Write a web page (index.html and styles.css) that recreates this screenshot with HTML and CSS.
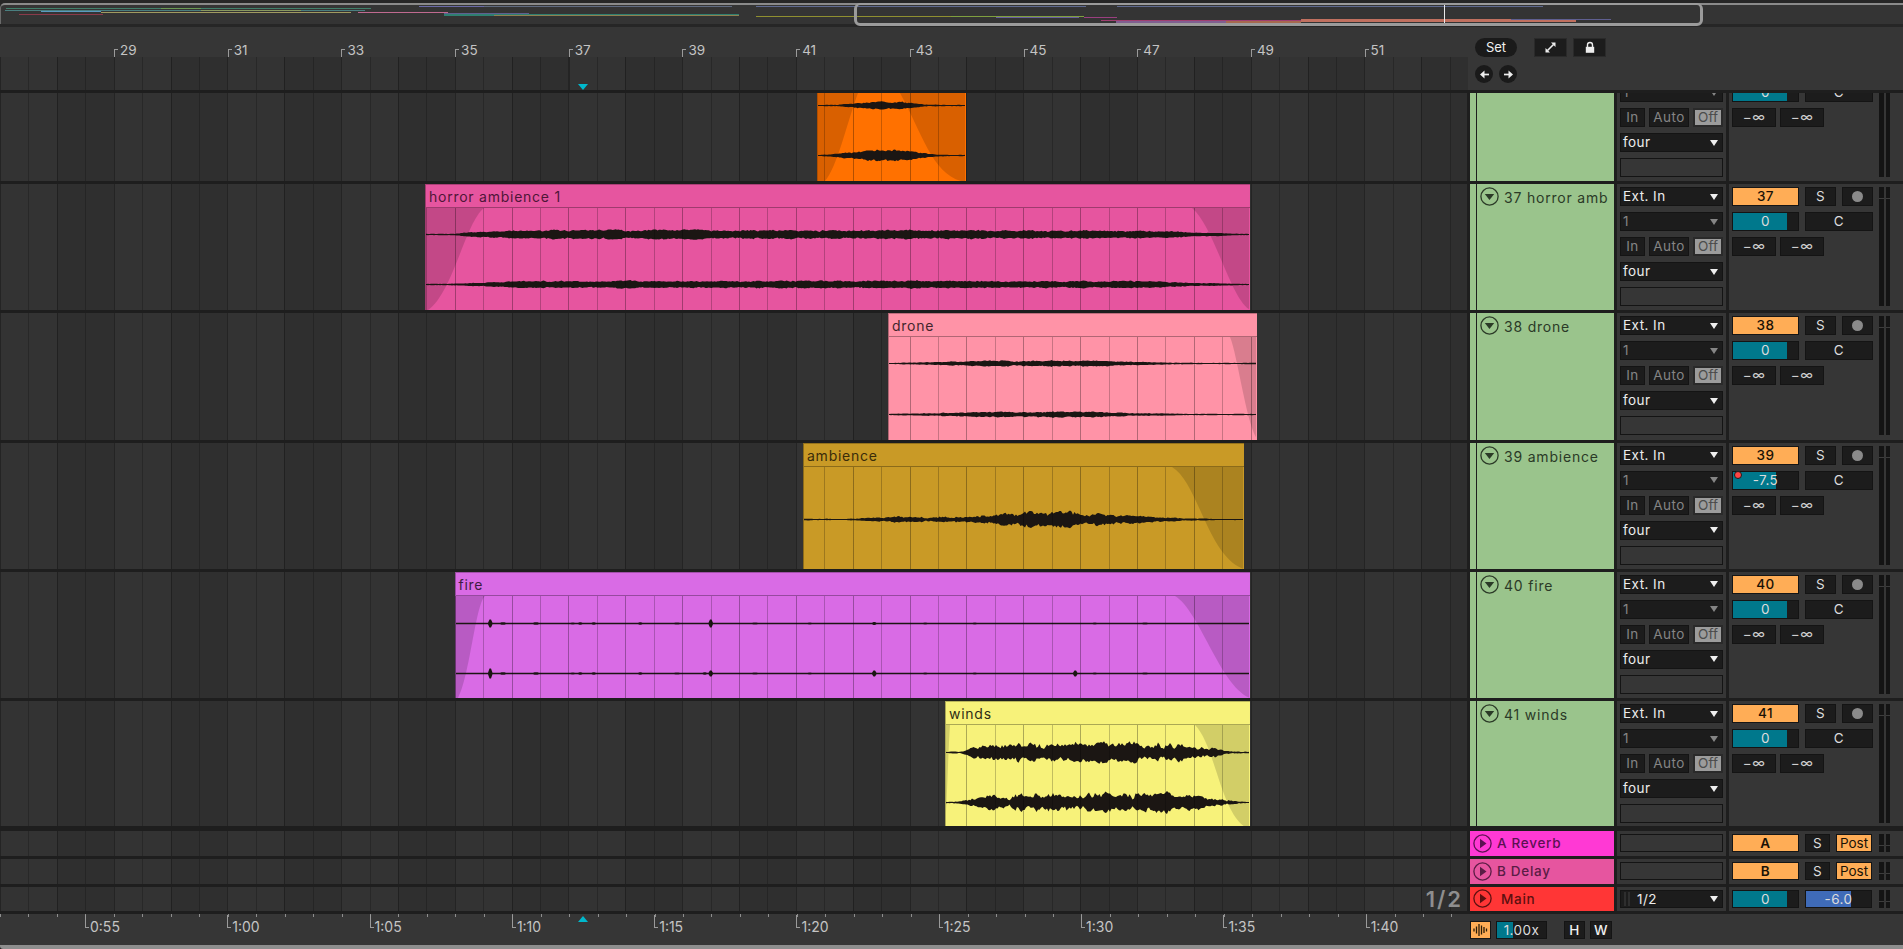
FILE: index.html
```html
<!DOCTYPE html>
<html lang="en">
<head>
    <meta charset="UTF-8">
    <title>Arrangement View</title>
    <link rel="stylesheet" href="styles.css">
</head>
<body>
    <svg class="icon-defs" width="0" height="0">
        <symbol id="icon-fold" viewBox="0 0 19 19">
            <circle cx="9.5" cy="9.5" r="8.6" fill="none" stroke="currentColor" stroke-width="1.3"/>
            <polygon points="4.8,7 14.2,7 9.5,13" fill="currentColor"/>
        </symbol>
        <symbol id="icon-play" viewBox="0 0 19 19">
            <circle cx="9.5" cy="9.5" r="8.6" fill="none" stroke="currentColor" stroke-width="1.3"/>
            <polygon points="7,4.8 7,14.2 13.5,9.5" fill="currentColor"/>
        </symbol>
    </svg>

    <div class="overview">
        <svg class="overview-map" width="1903" height="19">
            <rect x="5" y="3" width="365" height="1" fill="#3f7f6a"/>
            <rect x="160" y="3" width="40" height="1" fill="#6a9a55"/>
            <rect x="4" y="5" width="360" height="1" fill="#4a7f80"/>
            <rect x="40" y="6" width="60" height="1" fill="#5a9ac0"/>
            <rect x="100" y="7" width="250" height="1" fill="#a09a60"/>
            <rect x="200" y="5" width="100" height="1" fill="#8a9a60"/>
            <rect x="18" y="9" width="84" height="1" fill="#8a3a4a"/>
            <rect x="357" y="7" width="90" height="1" fill="#c06a90"/>
            <rect x="418" y="1" width="65" height="1" fill="#6a6aa8"/>
            <rect x="483" y="1" width="248" height="1" fill="#5f6a80"/>
            <rect x="755" y="1" width="330" height="1" fill="#5f6a90"/>
            <rect x="1116" y="1" width="426" height="1" fill="#5f6a90"/>
            <rect x="443" y="8" width="85" height="1" fill="#5f5f90"/>
            <rect x="443" y="9" width="295" height="2" fill="#2f7f70"/>
            <rect x="493" y="10" width="245" height="1" fill="#8f8050"/>
            <rect x="755" y="11" width="200" height="1" fill="#8f8f30"/>
            <rect x="950" y="11" width="133" height="1" fill="#7f9f3f"/>
            <rect x="995" y="12" width="83" height="1" fill="#6a5fa0"/>
            <rect x="1083" y="12" width="33" height="1" fill="#9a3f80"/>
            <rect x="1100" y="15" width="360" height="1" fill="#a03f70"/>
            <rect x="1115" y="16" width="110" height="2" fill="#7f5f90"/>
            <rect x="1225" y="16" width="75" height="2" fill="#a5694f"/>
            <rect x="1300" y="14" width="275" height="3" fill="#c0705f"/>
            <rect x="1380" y="18" width="190" height="1" fill="#c08a30"/>
            <rect x="1510" y="14" width="100" height="1" fill="#5f5f90"/>
            <rect x="1443" y="0" width="1" height="19" fill="#e8e8e8"/>
        </svg>
        <div class="overview-frame"></div>
    </div>

    <div class="header">
        <div class="bar-ruler">
            <div class="ruler-marks">
                <div class="bar-mark">29</div>
                <div class="bar-mark">31</div>
                <div class="bar-mark">33</div>
                <div class="bar-mark">35</div>
                <div class="bar-mark">37</div>
                <div class="bar-mark">39</div>
                <div class="bar-mark">41</div>
                <div class="bar-mark">43</div>
                <div class="bar-mark">45</div>
                <div class="bar-mark">47</div>
                <div class="bar-mark">49</div>
                <div class="bar-mark">51</div>
            </div>
            <div class="beat-area">
                <div class="grid"></div>
                <div class="marker marker-down"></div>
            </div>
        </div>
        <div class="session-tools">
            <div class="tool-row">
                <div class="pill">Set</div>
                <div class="square-btn expand-btn">
                    <svg width="13" height="13" viewBox="0 0 13 13"><path d="M3.5 9.5 L9.5 3.5" stroke="#eee" stroke-width="1.6"/><polygon points="7,1.5 11.5,1.5 11.5,6" fill="#eee"/><polygon points="1.5,7 6,11.5 1.5,11.5" fill="#eee"/></svg>
                </div>
                <div class="square-btn">
                    <svg width="12" height="13" viewBox="0 0 12 13"><path d="M3.5 6 V4 a2.5 2.5 0 0 1 5 0 V6" fill="none" stroke="#eee" stroke-width="1.4"/><rect x="1.8" y="5.8" width="8.4" height="6" fill="#eee"/></svg>
                </div>
            </div>
            <div class="tool-row">
                <div class="nudge-btn">
                    <svg width="11" height="11" viewBox="0 0 11 11"><path d="M10 5.5 H3" stroke="#eee" stroke-width="1.7"/><polygon points="5.5,1.5 5.5,9.5 1,5.5" fill="#eee"/></svg>
                </div>
                <div class="nudge-btn">
                    <svg width="11" height="11" viewBox="0 0 11 11"><path d="M1 5.5 H8" stroke="#eee" stroke-width="1.7"/><polygon points="5.5,1.5 5.5,9.5 10,5.5" fill="#eee"/></svg>
                </div>
            </div>
        </div>
    </div>

    <!-- 36 is scrolled, only the bottom of it shows -->
    <div class="track track-cut">
        <div class="lane">
            <div class="clip clip-orange" style="left: 817px; width: 149px;">
                <div class="clip-body">
                    <svg width="100%" height="100%">
                        <path class="fade" d="M0 0H41C30 30 20 75 8 88H0Z"/>
                        <path class="fade" d="M149 0H83C105 40 115 80 144 88H149Z"/>
                        <path class="wave" data-w="149" data-mid="12" data-seed="3" data-noise="0.2" data-env="0:.6 22:.7 45:3 80:3.5 110:.8 149:.6"/>
                        <path class="wave" data-w="149" data-mid="62" data-seed="5" data-noise="0.2" data-env="0:.6 14:1 45:4 66:5.5 90:4 120:.8 149:.6"/>
                    </svg>
                </div>
            </div>
            <div class="grid"></div>
        </div>
        <div class="track-strip"></div>
        <div class="track-title"></div>
        <div class="panel routing">
            <div class="ctl select dim"><span>1</span><i class="arrow"></i></div>
            <div class="monitor">
                <div class="ctl mon-in dim">In</div>
                <div class="ctl mon-auto dim">Auto</div>
                <div class="ctl mon-off">Off</div>
            </div>
            <div class="ctl select"><span>four</span><i class="arrow"></i></div>
            <div class="ctl field"></div>
        </div>
        <div class="panel channel">
            <div class="chan-rows">
                <div class="chan-row">
                    <div class="ctl vol" style="--fill: 83%;">0</div>
                    <div class="ctl pan">C</div>
                </div>
                <div class="chan-row chan-row-tight">
                    <div class="ctl peak">−∞</div>
                    <div class="ctl peak">−∞</div>
                </div>
            </div>
            <div class="meter"><i></i><i></i></div>
        </div>
    </div>

    <div class="track">
        <div class="lane">
            <div class="clip clip-horror" style="left: 425px; width: 825px;">
                <div class="clip-name">horror ambience 1</div>
                <div class="clip-body">
                    <svg width="100%" height="100%">
                        <path class="fade" d="M0 0H59C40 15 28 85 3 102H0Z"/>
                        <path class="fade" d="M825 0H767C790 20 805 90 825 102Z"/>
                        <path class="wave" data-w="825" data-mid="26" data-seed="11" data-noise="0.2" data-env="0:.6 30:.7 45:2.5 80:3.5 140:4 500:4 720:3.5 770:2 825:.5"/>
                        <path class="wave" data-w="825" data-mid="76" data-seed="17" data-noise="0.2" data-env="0:.6 30:.7 50:1.8 100:3 400:3.5 720:3 770:1.5 825:.5"/>
                    </svg>
                </div>
            </div>
            <div class="grid"></div>
        </div>
        <div class="track-strip"></div>
        <div class="track-title"><svg class="fold"><use href="#icon-fold"/></svg><span>37 horror amb</span></div>
        <div class="panel routing">
            <div class="ctl select"><span>Ext. In</span><i class="arrow"></i></div>
            <div class="ctl select dim"><span>1</span><i class="arrow"></i></div>
            <div class="monitor">
                <div class="ctl mon-in dim">In</div>
                <div class="ctl mon-auto dim">Auto</div>
                <div class="ctl mon-off">Off</div>
            </div>
            <div class="ctl select"><span>four</span><i class="arrow"></i></div>
            <div class="ctl field"></div>
        </div>
        <div class="panel channel">
            <div class="chan-rows">
                <div class="chan-row">
                    <div class="ctl arm">37</div>
                    <div class="ctl solo">S</div>
                    <div class="ctl rec"><i class="rec-dot"></i></div>
                </div>
                <div class="chan-row">
                    <div class="ctl vol" style="--fill: 83%;">0</div>
                    <div class="ctl pan">C</div>
                </div>
                <div class="chan-row chan-row-tight">
                    <div class="ctl peak">−∞</div>
                    <div class="ctl peak">−∞</div>
                </div>
            </div>
            <div class="meter"><i></i><i></i></div>
        </div>
    </div>

    <div class="track">
        <div class="lane">
            <div class="clip clip-drone" style="left: 888px; width: 369px;">
                <div class="clip-name">drone</div>
                <div class="clip-body">
                    <svg width="100%" height="100%">
                        <path class="fade" d="M369 0H342C350 20 358 85 369 102Z"/>
                        <path class="wave" data-w="369" data-mid="26" data-seed="23" data-noise="0.25" data-env="0:.6 40:1.2 100:2.4 210:2.4 270:1.2 300:.7 369:.6"/>
                        <path class="wave" data-w="369" data-mid="77" data-seed="29" data-noise="0.25" data-env="0:.6 40:1.2 100:2.4 200:2.6 260:1.2 300:.7 369:.6"/>
                    </svg>
                </div>
            </div>
            <div class="grid"></div>
        </div>
        <div class="track-strip"></div>
        <div class="track-title"><svg class="fold"><use href="#icon-fold"/></svg><span>38 drone</span></div>
        <div class="panel routing">
            <div class="ctl select"><span>Ext. In</span><i class="arrow"></i></div>
            <div class="ctl select dim"><span>1</span><i class="arrow"></i></div>
            <div class="monitor">
                <div class="ctl mon-in dim">In</div>
                <div class="ctl mon-auto dim">Auto</div>
                <div class="ctl mon-off">Off</div>
            </div>
            <div class="ctl select"><span>four</span><i class="arrow"></i></div>
            <div class="ctl field"></div>
        </div>
        <div class="panel channel">
            <div class="chan-rows">
                <div class="chan-row">
                    <div class="ctl arm">38</div>
                    <div class="ctl solo">S</div>
                    <div class="ctl rec"><i class="rec-dot"></i></div>
                </div>
                <div class="chan-row">
                    <div class="ctl vol" style="--fill: 83%;">0</div>
                    <div class="ctl pan">C</div>
                </div>
                <div class="chan-row chan-row-tight">
                    <div class="ctl peak">−∞</div>
                    <div class="ctl peak">−∞</div>
                </div>
            </div>
            <div class="meter"><i></i><i></i></div>
        </div>
    </div>

    <div class="track">
        <div class="lane">
            <div class="clip clip-ambience" style="left: 803px; width: 441px;">
                <div class="clip-name">ambience</div>
                <div class="clip-body">
                    <svg width="100%" height="100%">
                        <path class="fade" d="M441 0H369C395 15 405 90 441 102Z"/>
                        <path class="wave" data-w="441" data-mid="52" data-seed="31" data-noise="0.35" data-env="0:.6 50:.8 100:2.5 190:3.5 215:6 285:6 305:3.5 345:2.5 385:1 410:.6 441:.5"/>
                    </svg>
                </div>
            </div>
            <div class="grid"></div>
        </div>
        <div class="track-strip"></div>
        <div class="track-title"><svg class="fold"><use href="#icon-fold"/></svg><span>39 ambience</span></div>
        <div class="panel routing">
            <div class="ctl select"><span>Ext. In</span><i class="arrow"></i></div>
            <div class="ctl select dim"><span>1</span><i class="arrow"></i></div>
            <div class="monitor">
                <div class="ctl mon-in dim">In</div>
                <div class="ctl mon-auto dim">Auto</div>
                <div class="ctl mon-off">Off</div>
            </div>
            <div class="ctl select"><span>four</span><i class="arrow"></i></div>
            <div class="ctl field"></div>
        </div>
        <div class="panel channel">
            <div class="chan-rows">
                <div class="chan-row">
                    <div class="ctl arm">39</div>
                    <div class="ctl solo">S</div>
                    <div class="ctl rec"><i class="rec-dot"></i></div>
                </div>
                <div class="chan-row">
                    <div class="ctl vol automated" style="--fill: 66%;">-7.5<i class="auto-dot"></i></div>
                    <div class="ctl pan">C</div>
                </div>
                <div class="chan-row chan-row-tight">
                    <div class="ctl peak">−∞</div>
                    <div class="ctl peak">−∞</div>
                </div>
            </div>
            <div class="meter"><i></i><i></i></div>
        </div>
    </div>

    <div class="track">
        <div class="lane">
            <div class="clip clip-fire" style="left: 454.5px; width: 795.5px;">
                <div class="clip-name">fire</div>
                <div class="clip-body">
                    <svg width="100%" height="100%">
                        <path class="fade" d="M0 0H30C20 10 15 80 3 102H0Z"/>
                        <path class="fade" d="M795 0H720C745 15 765 90 795 102Z"/>
                        <path class="wave" data-w="795" data-mid="27" data-seed="37" data-noise="0" data-env="0:.8 795:.8" data-spikes="35:4 48:1.2 81:1.2 118:1.1 125:1.2 139:1.2 185:1.2 222:1.1 256:4 300:1.1 355:1 419:1.5 470:1.1 520:1.1 640:1 690:1"/>
                        <path class="wave" data-w="795" data-mid="77" data-seed="41" data-noise="0" data-env="0:.8 795:.8" data-spikes="35:5 48:1.2 81:1.2 118:1.1 125:1.2 139:1.2 185:1.2 222:1.1 250:1.2 256:3 300:1.1 355:1 419:3 470:1.1 520:1.1 620:3 640:1 690:1"/>
                    </svg>
                </div>
            </div>
            <div class="grid"></div>
        </div>
        <div class="track-strip"></div>
        <div class="track-title"><svg class="fold"><use href="#icon-fold"/></svg><span>40 fire</span></div>
        <div class="panel routing">
            <div class="ctl select"><span>Ext. In</span><i class="arrow"></i></div>
            <div class="ctl select dim"><span>1</span><i class="arrow"></i></div>
            <div class="monitor">
                <div class="ctl mon-in dim">In</div>
                <div class="ctl mon-auto dim">Auto</div>
                <div class="ctl mon-off">Off</div>
            </div>
            <div class="ctl select"><span>four</span><i class="arrow"></i></div>
            <div class="ctl field"></div>
        </div>
        <div class="panel channel">
            <div class="chan-rows">
                <div class="chan-row">
                    <div class="ctl arm">40</div>
                    <div class="ctl solo">S</div>
                    <div class="ctl rec"><i class="rec-dot"></i></div>
                </div>
                <div class="chan-row">
                    <div class="ctl vol" style="--fill: 83%;">0</div>
                    <div class="ctl pan">C</div>
                </div>
                <div class="chan-row chan-row-tight">
                    <div class="ctl peak">−∞</div>
                    <div class="ctl peak">−∞</div>
                </div>
            </div>
            <div class="meter"><i></i><i></i></div>
        </div>
    </div>

    <div class="track track-last">
        <div class="lane">
            <div class="clip clip-winds" style="left: 945px; width: 305px;">
                <div class="clip-name">winds</div>
                <div class="clip-body">
                    <svg width="100%" height="100%">
                        <path class="fade" d="M0 0H5C3 30 2 80 0 102Z"/>
                        <path class="fade" d="M305 0H250C270 20 275 85 300 102H305Z"/>
                        <path class="wave" data-w="305" data-mid="27" data-seed="43" data-noise="0.4" data-env="0:.6 15:.9 30:4 50:6.5 120:7.5 220:7 265:4.5 285:1.5 305:.6"/>
                        <path class="wave" data-w="305" data-mid="77" data-seed="47" data-noise="0.4" data-env="0:.6 15:.9 30:4 50:6 120:7.5 220:7 265:4 290:1.5 305:.6"/>
                    </svg>
                </div>
            </div>
            <div class="grid"></div>
        </div>
        <div class="track-strip"></div>
        <div class="track-title"><svg class="fold"><use href="#icon-fold"/></svg><span>41 winds</span></div>
        <div class="panel routing">
            <div class="ctl select"><span>Ext. In</span><i class="arrow"></i></div>
            <div class="ctl select dim"><span>1</span><i class="arrow"></i></div>
            <div class="monitor">
                <div class="ctl mon-in dim">In</div>
                <div class="ctl mon-auto dim">Auto</div>
                <div class="ctl mon-off">Off</div>
            </div>
            <div class="ctl select"><span>four</span><i class="arrow"></i></div>
            <div class="ctl field"></div>
        </div>
        <div class="panel channel">
            <div class="chan-rows">
                <div class="chan-row">
                    <div class="ctl arm">41</div>
                    <div class="ctl solo">S</div>
                    <div class="ctl rec"><i class="rec-dot"></i></div>
                </div>
                <div class="chan-row">
                    <div class="ctl vol" style="--fill: 83%;">0</div>
                    <div class="ctl pan">C</div>
                </div>
                <div class="chan-row chan-row-tight">
                    <div class="ctl peak">−∞</div>
                    <div class="ctl peak">−∞</div>
                </div>
            </div>
            <div class="meter"><i></i><i></i></div>
        </div>
    </div>

    <!-- return tracks and main -->
    <div class="track return">
        <div class="lane"><div class="grid"></div></div>
        <div class="return-title title-a"><svg class="fold"><use href="#icon-play"/></svg><span>A Reverb</span></div>
        <div class="panel routing"><div class="ctl field"></div></div>
        <div class="panel channel">
            <div class="chan-row">
                <div class="ctl arm">A</div>
                <div class="ctl solo solo-small">S</div>
                <div class="ctl post">Post</div>
            </div>
            <div class="meter"><i></i><i></i></div>
        </div>
    </div>

    <div class="track return">
        <div class="lane"><div class="grid"></div></div>
        <div class="return-title title-b"><svg class="fold"><use href="#icon-play"/></svg><span>B Delay</span></div>
        <div class="panel routing"><div class="ctl field"></div></div>
        <div class="panel channel">
            <div class="chan-row">
                <div class="ctl arm">B</div>
                <div class="ctl solo solo-small">S</div>
                <div class="ctl post">Post</div>
            </div>
            <div class="meter"><i></i><i></i></div>
        </div>
    </div>

    <div class="track return return-main">
        <div class="lane"><div class="grid"></div><div class="overlay-ratio">1/2</div></div>
        <div class="return-title title-main"><svg class="fold"><use href="#icon-play"/></svg><span>Main</span></div>
        <div class="panel routing">
            <div class="ctl select select-main"><i class="mini-meter"></i><span>1/2</span><i class="arrow"></i></div>
        </div>
        <div class="panel channel">
            <div class="chan-row">
                <div class="ctl vol" style="--fill: 83%;">0</div>
                <div class="ctl vol vol-blue" style="--fill: 69%;">-6.0</div>
            </div>
            <div class="meter"><i></i><i></i></div>
        </div>
    </div>

    <div class="footer">
        <div class="time-ruler">
            <div class="time-ticks"></div>
            <div class="time-marks">
                <div class="time-mark">0:55</div>
                <div class="time-mark">1:00</div>
                <div class="time-mark">1:05</div>
                <div class="time-mark">1:10</div>
                <div class="time-mark">1:15</div>
                <div class="time-mark">1:20</div>
                <div class="time-mark">1:25</div>
                <div class="time-mark">1:30</div>
                <div class="time-mark">1:35</div>
                <div class="time-mark">1:40</div>
            </div>
            <div class="marker marker-up"></div>
        </div>
        <div class="footer-tools">
            <div class="tool-wave">
                <svg width="15" height="14" viewBox="0 0 15 14"><path d="M1 5.5v3M3.5 3.5v7M6 1v12M8.5 2.5v9M11 4v6M13.5 5.5v3" stroke="#2a1c08" stroke-width="1.3"/></svg>
            </div>
            <div class="ctl vol zoom-amount" style="--fill: 32%;">1.00x</div>
            <div class="ctl tool-h">H</div>
            <div class="ctl tool-w">W</div>
        </div>
    </div>
    <div class="bottom-edge"></div>

    <script src="script.js"></script>
</body>
</html>
```

FILE: styles.css
```css
* {
    box-sizing: border-box;
}
html, body {
    margin: 0;
    height: 949px;
    overflow: hidden;
}
body {
    background-color: #1e1e1e;
    font-family: Inter, "Liberation Sans", sans-serif;
    font-size: 13.5px;
    color: #e6e6e6;
}

/* overview */
.icon-defs {
    position: absolute;
}
.overview {
    position: relative;
    height: 27px;
    background-color: #262626;
    padding-top: 3px;
}
.overview-map {
    display: block;
    height: 21px;
    width: 100%;
    background-color: #343434;
    border-top: 2px solid #8a8a8a;
    border-left: 1px solid #6a6a6a;
    border-top-left-radius: 5px;
}
.overview-frame {
    position: absolute;
    left: 854px;
    top: 3px;
    width: 849px;
    height: 23px;
    border: 3px solid #9b9b9b;
    border-top-width: 2px;
    border-radius: 6px;
}

/* top ruler */
.header {
    display: flex;
    height: 63px;
    margin-bottom: 3px;
    background-color: #363636;
}
.bar-ruler {
    width: 1468px;
    flex: none;
}
.ruler-marks {
    display: flex;
    height: 30px;
    padding-left: 114px;
}
.bar-mark {
    position: relative;
    width: 113.7px;
    flex: none;
    padding: 15px 0 0 6px;
    line-height: 16px;
    font-size: 13.5px;
    color: #c4c4c4;
}
.bar-mark::before {
    content: "";
    position: absolute;
    left: 0;
    top: 22px;
    width: 3px;
    height: 8px;
    border-left: 1px solid #9a9a9a;
    border-top: 1px solid #9a9a9a;
}
.beat-area {
    position: relative;
    height: 33px;
    background: repeating-linear-gradient(90deg, #333333 0 56.85px, #2f2f2f 56.85px 113.7px);
    overflow: hidden;
}
.session-tools {
    flex: 1;
    padding: 11px 0 0 7px;
}
.tool-row {
    display: flex;
    gap: 6px;
    margin-bottom: 8px;
}
.pill {
    width: 42px;
    height: 19px;
    border-radius: 10px;
    background-color: #1a1a1a;
    color: #f0f0f0;
    font-size: 13px;
    line-height: 19px;
    text-align: center;
}
.square-btn {
    display: flex;
    align-items: center;
    justify-content: center;
    width: 33px;
    height: 19px;
    background-color: #1c1c1c;
    border: 1px solid #2a2a2a;
}
.expand-btn {
    margin-left: 11px;
}
.nudge-btn {
    display: flex;
    align-items: center;
    justify-content: center;
    width: 18px;
    height: 18px;
    border-radius: 50%;
    background-color: #1a1a1a;
}
.marker {
    position: absolute;
    left: 578px;
    width: 0;
    height: 0;
    border-left: 5.5px solid transparent;
    border-right: 5.5px solid transparent;
}
.marker-down {
    bottom: 0;
    border-top: 6px solid #00b8cc;
    z-index: 2;
}
.marker-up {
    top: 2px;
    border-bottom: 6px solid #00b8cc;
}

/* track rows */
.track {
    display: flex;
    height: 126.3px;
    margin-bottom: 3px;
    overflow: hidden;
}
.track-cut {
    height: 88px;
}
.track-last {
    height: 124.8px;
    margin-bottom: 5px;
}
.lane {
    position: relative;
    width: 1467px;
    flex: none;
    margin-right: 3px;
    overflow: hidden;
    background: repeating-linear-gradient(90deg, #333333 0 56.85px, #2f2f2f 56.85px 113.7px);
}
.grid {
    position: absolute;
    top: 0;
    bottom: 0;
    left: 0;
    right: 0;
    z-index: 1;
    background: repeating-linear-gradient(90deg,
        rgba(0,0,0,0.3) 0 1px, transparent 1px 28.425px,
        rgba(0,0,0,0.22) 28.425px 29.425px, transparent 29.425px 56.85px);
}
.track-strip {
    width: 6px;
    flex: none;
    margin-right: 1px;
    background-color: #9ac48c;
}
.track-title {
    display: flex;
    align-items: flex-start;
    width: 137px;
    flex: none;
    margin-right: 3px;
    padding: 3px 0 0 3px;
    background-color: #9ac48c;
    color: #2b3a27;
    font-size: 14px;
    letter-spacing: 0.8px;
    line-height: 21px;
}
.fold {
    width: 19px;
    height: 19px;
    flex: none;
    margin-right: 5px;
}
.return-title {
    display: flex;
    align-items: center;
    width: 144px;
    flex: none;
    margin-right: 3px;
    padding-left: 3px;
    font-size: 13.5px;
    font-weight: 500;
    letter-spacing: 0.7px;
}
.title-a {
    background-color: #ff39d4;
    color: #5c1152;
}
.title-b {
    background-color: #e6559f;
    color: #5a1c45;
}
.title-main {
    background-color: #ff3636;
    color: #5c1010;
}
.title-main .fold {
    margin-right: 9px;
}
.panel {
    background-color: #363636;
    padding: 3px;
}
.routing {
    display: flex;
    flex-direction: column;
    gap: 6px;
    width: 109px;
    flex: none;
    margin-right: 3px;
}
.track-cut .routing {
    justify-content: flex-end;
    padding-bottom: 4px;
}
.channel {
    display: flex;
    gap: 6px;
    flex: 1;
}
.track-cut .channel {
    align-items: flex-end;
    padding-bottom: 4px;
}
.chan-rows {
    display: flex;
    flex-direction: column;
    gap: 6px;
    width: 141px;
    flex: none;
    height: 119px;
}
.track-cut .chan-rows {
    height: 44px;
    margin-bottom: 50px;
}
.chan-row {
    display: flex;
    gap: 6px;
    width: 141px;
    flex: none;
}
.chan-row-tight {
    gap: 4px;
}

/* controls */
.ctl {
    position: relative;
    flex: none;
    height: 19px;
    line-height: 17px;
    text-align: center;
    background-color: #1c1c1c;
    border: 1px solid #141414;
    letter-spacing: 0.45px;
}
.select {
    display: flex;
    align-items: center;
    justify-content: space-between;
    padding: 0 4px 0 2px;
    color: #ececec;
}
.arrow {
    width: 0;
    height: 0;
    border-left: 4.5px solid transparent;
    border-right: 4.5px solid transparent;
    border-top: 6.5px solid #eeeeee;
}
.dim {
    color: #858585;
}
.dim .arrow {
    border-top-color: #858585;
}
.monitor {
    display: flex;
    justify-content: space-between;
}
.mon-in {
    width: 25px;
}
.mon-auto {
    width: 40px;
}
.mon-off {
    width: 30px;
    background-color: #9c9c9c;
    color: #4c4c4c;
    border: 2px solid #2a2a2a;
    line-height: 15px;
    letter-spacing: 0;
}
.field {
    background-color: #363636;
}
.arm {
    width: 67px;
    background-color: #ffad56;
    color: #1a1206;
    border-color: #161616;
    font-weight: 500;
}
.solo {
    width: 31px;
    color: #dcdcdc;
}
.solo-small {
    width: 25px;
}
.rec {
    display: flex;
    align-items: center;
    justify-content: center;
    width: 31px;
}
.rec-dot {
    width: 11px;
    height: 11px;
    border-radius: 50%;
    background-color: #8a8a8a;
}
.vol {
    width: 67px;
    color: #dcdcdc;
    background: linear-gradient(90deg, #00788c var(--fill), #1c1c1c var(--fill));
}
.vol-blue {
    background: linear-gradient(90deg, #3f6bb8 var(--fill), #1c1c1c var(--fill));
}
.auto-dot {
    position: absolute;
    left: 1px;
    top: -1px;
    width: 8px;
    height: 8px;
    border-radius: 50%;
    background-color: #ff4545;
    border: 1px solid #1c1c1c;
}
.pan {
    width: 68px;
    color: #dcdcdc;
}
.peak {
    width: 44px;
    color: #cfcfcf;
}
.post {
    width: 36px;
    background-color: #ffad56;
    color: #1a1206;
    letter-spacing: 0;
}
.meter {
    display: flex;
    gap: 2px;
    flex: none;
    width: 11px;
    height: 119px;
}
.meter i {
    width: 4.5px;
    background: linear-gradient(180deg, #141414 0 11px, #3c3c3c 11px 12px, #141414 12px);
}

/* clips, the left and width of each is its place on the timeline */
.clip {
    position: absolute;
    top: 0;
    bottom: 0;
}
.clip-name {
    position: relative;
    z-index: 2;
    height: 24px;
    padding-left: 3px;
    background-color: inherit;
    line-height: 23px;
    font-size: 14px;
    letter-spacing: 0.75px;
    border-top: 1px solid rgba(0,0,0,0.25);
    border-bottom: 1px solid rgba(0,0,0,0.3);
    border-left: 1px solid rgba(0,0,0,0.3);
}
.clip-body {
    position: absolute;
    top: 24px;
    bottom: 0;
    left: 0;
    right: 0;
    overflow: hidden;
    border-left: 1px solid rgba(0,0,0,0.3);
}
.clip-body svg {
    display: block;
    margin-left: -1px;
}
.fade {
    fill: rgba(0,0,0,0.15);
}
.wave {
    fill: #1b1613;
}
.clip-orange {
    background-color: #ff7100;
}
.clip-orange .clip-body {
    top: 0;
    background-color: #ff7100;
}
.clip-horror {
    background-color: #e6559f;
    color: #4e1638;
}
.clip-drone {
    background-color: #ff93a7;
    color: #42262c;
}
.clip-ambience {
    background-color: #c99a26;
    color: #3a2c0a;
}
.clip-fire {
    background-color: #d96be5;
    color: #3e1b42;
}
.clip-winds {
    background-color: #f7f27a;
    color: #2e2d14;
}

/* returns */
.return {
    height: 25px;
}
.return-main {
    height: 24px;
    overflow: visible;
}
.return-main .lane {
    overflow: visible;
}
.return .ctl {
    height: 18px;
    line-height: 16px;
}
.return .field {
    background-color: #363636;
}
.return .meter {
    height: 18px;
}
.return .arm {
    font-weight: 600;
}
.select-main {
    padding-left: 3px;
}
.select-main span {
    margin-right: auto;
}
.mini-meter {
    width: 7px;
    height: 14px;
    margin-right: 6px;
    background: repeating-linear-gradient(90deg, #2e2e2e 0 2px, #1c1c1c 2px 3.5px);
}
.overlay-ratio {
    position: absolute;
    right: 4px;
    top: 0;
    z-index: 2;
    color: #8e8e8e;
    font-size: 22px;
    font-weight: 600;
    letter-spacing: 2px;
    line-height: 24px;
}

/* bottom ruler */
.footer {
    display: flex;
    height: 31px;
    background-color: #363636;
}
.time-ruler {
    position: relative;
    width: 1467px;
    flex: none;
    margin-right: 3px;
}
.time-ticks {
    height: 3px;
    background: repeating-linear-gradient(90deg, #8e8e8e 0 1px, transparent 1px 28.46px);
}
.time-marks {
    display: flex;
    padding-left: 85px;
}
.time-mark {
    position: relative;
    width: 142.3px;
    flex: none;
    padding: 1px 0 0 5px;
    line-height: 18px;
    font-size: 14px;
    color: #c4c4c4;
}
.time-mark::before {
    content: "";
    position: absolute;
    left: 0;
    top: -2px;
    width: 3px;
    height: 12px;
    border-left: 1px solid #9a9a9a;
    border-bottom: 1px solid #9a9a9a;
}
.footer-tools {
    display: flex;
    align-items: flex-start;
    padding-top: 7px;
    gap: 5px;
}
.tool-wave {
    display: flex;
    align-items: center;
    justify-content: center;
    width: 21px;
    height: 18px;
    background-color: #ffad56;
    border: 1px solid #161616;
}
.zoom-amount {
    width: 51px;
    height: 18px;
    line-height: 16px;
    margin-right: 12px;
}
.tool-h,
.tool-w {
    height: 18px;
    line-height: 16px;
    font-weight: 500;
    color: #f0f0f0;
}
.tool-h {
    width: 21px;
}
.tool-w {
    width: 22px;
}
.bottom-edge {
    height: 4px;
    background-color: #8e8e8e;
    border-bottom-left-radius: 3px;
}
```

FILE: script.js
```js
// draws the waveforms from the envelope points on each path

function makeRandom(seed) {
    let s = seed * 7919 + 13;
    return () => {
        s = (s * 16807) % 2147483647;
        return s / 2147483647;
    };
}

function parsePairs(text) {
    if (!text) return [];
    return text.trim().split(/\s+/).map(pair => pair.split(':').map(Number));
}

function envelopeAt(points, x) {
    for (let i = 1; i < points.length; i++) {
        if (x <= points[i][0]) {
            const [x0, a0] = points[i - 1];
            const [x1, a1] = points[i];
            return a0 + (a1 - a0) * (x - x0) / (x1 - x0);
        }
    }
    return points[points.length - 1][1];
}

function buildWave(path) {
    const width = Number(path.dataset.w);
    const mid = Number(path.dataset.mid) + 0.5;
    const noise = Number(path.dataset.noise);
    const env = parsePairs(path.dataset.env);
    const spikes = parsePairs(path.dataset.spikes);
    const random = makeRandom(Number(path.dataset.seed));

    const top = [];
    const bottom = [];
    let slow = 0;
    for (let x = 0; x <= width; x += 1.5) {
        // slow drift gives the blobs, the fast part the rough edge
        slow = slow * 0.7 + (random() - 0.5) * 0.7;
        const base = envelopeAt(env, x);
        let amp = Math.max(0.6, base * (1 + noise * slow * 2 + noise * (random() - 0.5)));
        let low = Math.max(0.6, base * (1 + noise * slow * 2 + noise * (random() - 0.5)));
        spikes.forEach(([sx, h]) => {
            if (Math.abs(sx - x) < 1.6) {
                amp = Math.max(amp, h);
                low = Math.max(low, h);
            }
        });
        top.push(`${x} ${(mid - amp).toFixed(1)}`);
        bottom.unshift(`${x} ${(mid + low).toFixed(1)}`);
    }
    path.setAttribute('d', `M${top.join('L')}L${bottom.join('L')}Z`);
}

document.querySelectorAll('.wave').forEach(buildWave);
```
